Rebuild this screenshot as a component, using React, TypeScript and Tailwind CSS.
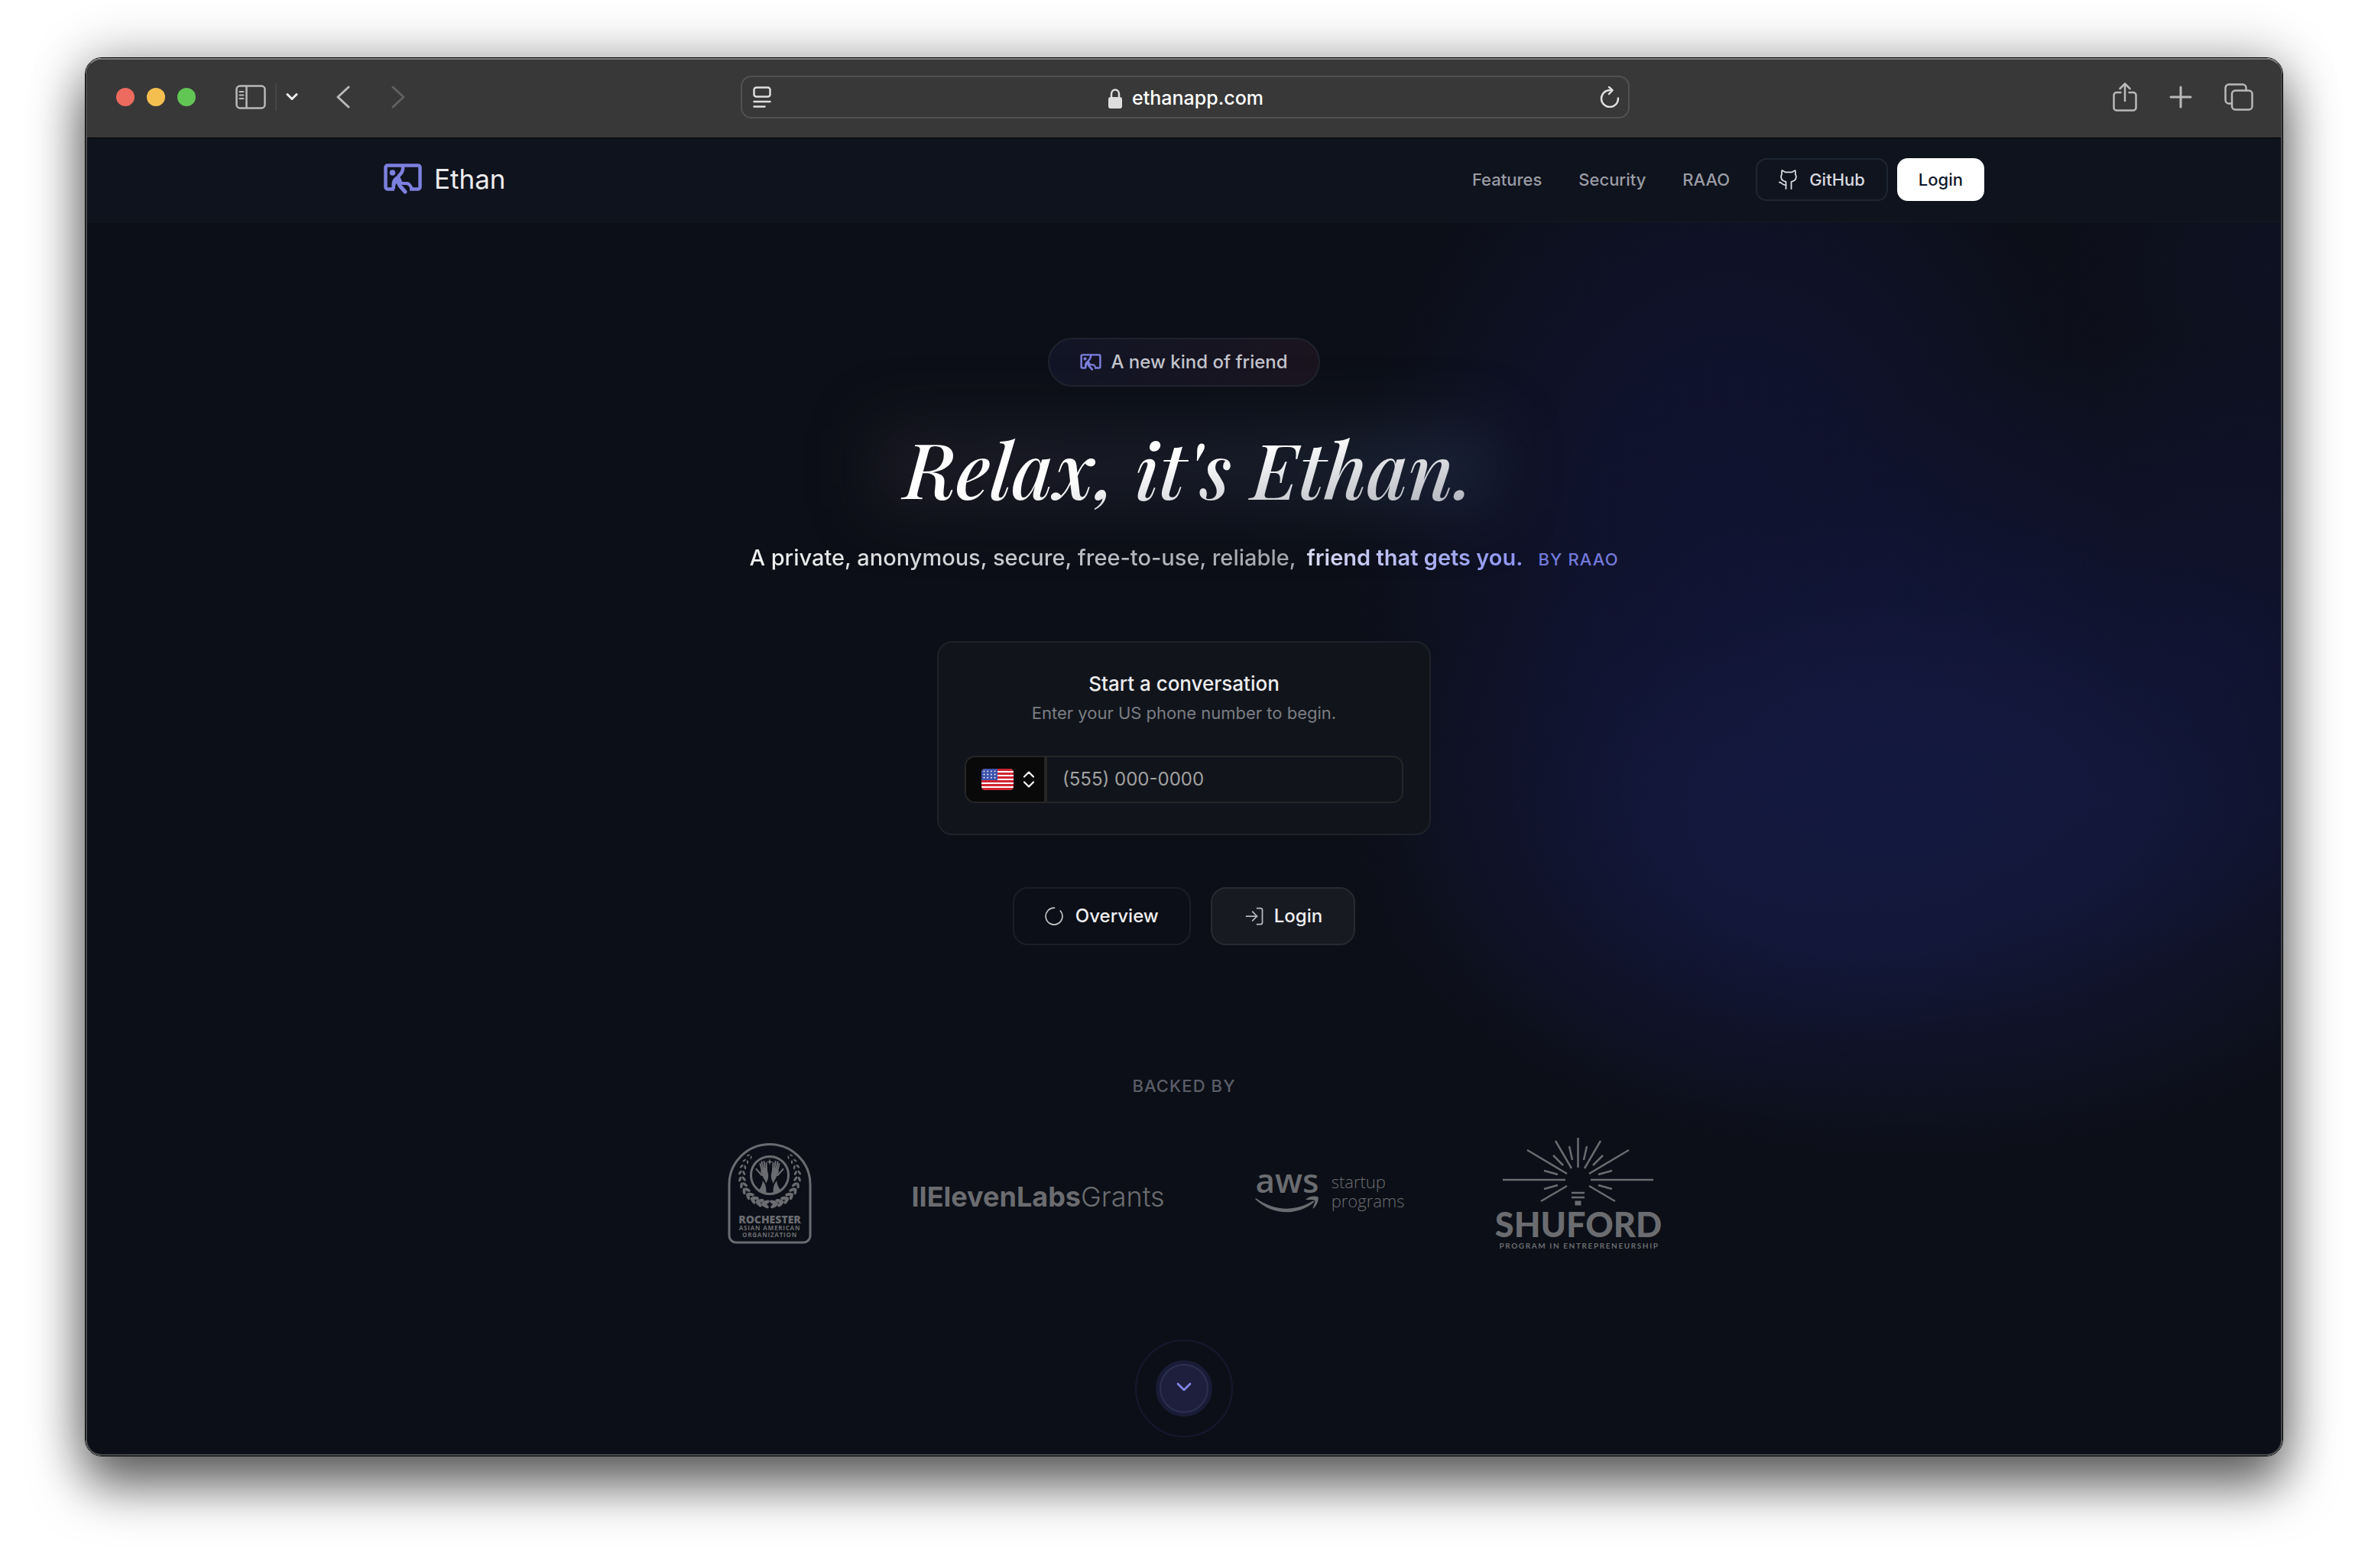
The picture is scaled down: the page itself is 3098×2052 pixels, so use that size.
import { useState } from "react";
import { ChevronDown, LogIn } from "lucide-react";

const navLinks = ["Features", "Security", "RAAO"];

function EthanMark({ className }: { className?: string }) {
  return (
    <svg viewBox="0 0 50 40" fill="none" stroke="currentColor" className={className} aria-hidden="true">
      <path d="M14 33.500H5a2.500 2.500 0 0 1-2.500-2.500V5A2.500 2.500 0 0 1 5 2.500h40A2.500 2.500 0 0 1 47.500 5v26a2.500 2.500 0 0 1-2.500 2.500H34" strokeWidth="4.500" strokeLinejoin="round" />
      <circle cx="11.500" cy="12" r="3.800" fill="currentColor" stroke="none" />
      <path d="M25 3c1 7-2 10-6 14" strokeWidth="4.500" />
      <path d="M19 24c3 1 5 2 7 2h5c3 1 4 3 6 7" strokeWidth="4" strokeLinejoin="round" />
      <path d="M17 20l4 9 7 8" strokeWidth="5" strokeLinecap="round" strokeLinejoin="round" />
      <path d="M10.500 33c0-4-.500-8 1.500-12 2-3 5-5 8-6l4 8-5 3c-3-1-4 2-4 7z" fill="currentColor" stroke="none" />
    </svg>
  );
}

function CatIcon() {
  return (
    <svg viewBox="0 0 28 28" className="size-7" fill="none" stroke="currentColor" strokeWidth="1.800" strokeLinecap="round" strokeLinejoin="round" aria-hidden="true">
      <path d="M4.500 2l4 2.300h9L21.500 2c.600 1.800.700 3.300.200 4.800 1 1.400 1.300 2.800 1.100 4.400-.400 3.200-2.600 5-6.300 5.600v9.200" />
      <path d="M4.500 2c-.600 1.800-.700 3.300-.200 4.800-1 1.400-1.300 2.800-1.100 4.400.400 3.200 2.600 5 6.300 5.600v9.200" />
      <path d="M1 17.500c3 0 3 4 8.500 3.500" />
    </svg>
  );
}

function BrowserBar() {
  const [url, setUrl] = useState("ethanapp.com");
  return (
    <div className="flex h-[103px] items-center border-b border-black bg-[#383838] px-9 pb-1 text-[#b9b9b9]">
      <div className="flex flex-1 items-center pl-0.5">
        <div className="flex gap-4">
          <span className="size-6 rounded-full bg-[#ed6a5f]" />
          <span className="size-6 rounded-full bg-[#f5bf4f]" />
          <span className="size-6 rounded-full bg-[#62c655]" />
        </div>
        <button aria-label="Sidebar" className="ml-[52px]">
          <svg viewBox="0 0 40 32" className="h-8 w-10" fill="none" stroke="currentColor" strokeWidth="2.500">
            <rect x="1.500" y="1.500" width="37" height="29" rx="4.500" />
            <path d="M14.500 2v28" />
            <path d="M5.500 9h5M5.500 13.500h5M5.500 18h5" strokeWidth="2" strokeLinecap="round" />
          </svg>
        </button>
        <span className="ml-3 h-9 w-0.5 bg-[#464646]" />
        <button aria-label="Tab groups" className="ml-3">
          <svg viewBox="0 0 16 12" className="h-3 w-4" fill="none" stroke="#ececec" strokeWidth="3" strokeLinecap="round" strokeLinejoin="round">
            <path d="M2 2.500l6 6 6-6" />
          </svg>
        </button>
        <button aria-label="Back" className="ml-[50px]">
          <svg viewBox="0 0 18 30" className="h-[30px] w-[18px]" fill="none" stroke="currentColor" strokeWidth="3" strokeLinecap="round" strokeLinejoin="round">
            <path d="M16 2L2 15l14 13" />
          </svg>
        </button>
        <button aria-label="Forward" className="ml-[54px] text-[#606060]">
          <svg viewBox="0 0 18 30" className="h-[30px] w-[18px]" fill="none" stroke="currentColor" strokeWidth="3" strokeLinecap="round" strokeLinejoin="round">
            <path d="M2 2l14 13L2 28" />
          </svg>
        </button>
      </div>

      <div className="flex h-14 w-[1163px] items-center justify-between rounded-[14px] border-2 border-[#515151] pr-2.5 pl-3.5 text-[#dedede]">
        <svg viewBox="0 0 24 28" className="h-7 w-6" fill="none" stroke="currentColor" strokeWidth="2.500" strokeLinecap="round" aria-hidden="true">
          <rect x="1.500" y="1.500" width="21" height="12" rx="3" />
          <path d="M1.500 20h21M1.500 26.500h14" />
        </svg>
        <div className="flex items-center gap-3 pt-1">
          <svg viewBox="0 0 20 26" className="h-[26px] w-5" aria-hidden="true">
            <rect x="1" y="11" width="18" height="15" rx="3" fill="currentColor" />
            <path d="M5 12V7a5 5.500 0 0 1 10 0v5" fill="none" stroke="currentColor" strokeWidth="2.500" />
          </svg>
          <input
            aria-label="Address"
            value={url}
            onChange={(e) => setUrl(e.target.value)}
            className="field-sizing-content bg-transparent text-[25px] font-medium text-white outline-none"
          />
        </div>
        <button aria-label="Reload">
          <svg viewBox="0 0 26 28" className="h-7 w-[26px]" fill="none" stroke="currentColor" strokeWidth="2.500" strokeLinecap="round" strokeLinejoin="round">
            <path d="M24 15.500A11 11 0 1 1 13 5h3" />
            <path d="M12 .800L16.500 5.200 12 10" />
          </svg>
        </button>
      </div>

      <div className="flex flex-1 items-center justify-end gap-[42px]">
        <button aria-label="Share">
          <svg viewBox="0 0 32 38" className="h-[38px] w-8" fill="none" stroke="currentColor" strokeWidth="2.500" strokeLinecap="round" strokeLinejoin="round">
            <path d="M10.500 13H5a3.500 3.500 0 0 0-3.500 3.500V33A3.500 3.500 0 0 0 5 36.500h22a3.500 3.500 0 0 0 3.500-3.500V16.500A3.500 3.500 0 0 0 27 13h-5.500" />
            <path d="M16 24V2M9.500 8L16 1.500 22.500 8" />
          </svg>
        </button>
        <button aria-label="New tab">
          <svg viewBox="0 0 30 30" className="size-[30px]" fill="none" stroke="currentColor" strokeWidth="3" strokeLinecap="round">
            <path d="M15 2v26M2 15h26" />
          </svg>
        </button>
        <button aria-label="Show tabs">
          <svg viewBox="0 0 38 36" className="h-9 w-[38px]" fill="none" stroke="currentColor" strokeWidth="2.500" strokeLinejoin="round">
            <rect x="10" y="9.500" width="26.500" height="25" rx="4.500" />
            <path d="M9.500 26.500H6A4.500 4.500 0 0 1 1.500 22V6A4.500 4.500 0 0 1 6 1.500h18A4.500 4.500 0 0 1 28.500 6v3" />
          </svg>
        </button>
      </div>
    </div>
  );
}

function Nav() {
  return (
    <header className="border-b-2 border-[#12161f] bg-[#0f131d]">
      <div className="mx-auto flex h-[108px] max-w-[2094px] items-center justify-between">
        <a href="#" className="flex items-center gap-4 pb-0.5">
          <EthanMark className="h-10 w-[50px] text-[#7c80de]" />
          <span className="text-[35px] text-[#ececee]">Ethan</span>
        </a>
        <nav className="flex items-center text-[22px] font-medium">
          <div className="mr-[34px] flex gap-12 text-[#9a9ca5]">
            {navLinks.map((l) => (
              <a key={l} href={`#${l.toLowerCase()}`}>
                {l}
              </a>
            ))}
          </div>
          <a href="#github" className="mr-3 flex h-14 items-center gap-3 rounded-[14px] border-2 border-[#1e2634] bg-[#10141e] px-7 text-[#d8dae0]">
            <CatIcon />
            GitHub
          </a>
          <a href="#login" className="flex h-14 items-center rounded-[14px] bg-white px-7 text-[#0f172a]">
            Login
          </a>
        </nav>
      </div>
    </header>
  );
}

function UsFlag() {
  return (
    <svg viewBox="0 0 42 28" className="h-7 w-[42px] rounded-[5px]" aria-hidden="true">
      <rect width="42" height="28" fill="#fff" />
      {[0, 1, 2, 3, 4, 5].map((i) => (
        <rect key={i} y={i * 5} width="42" height="3" fill="#cf2431" />
      ))}
      <rect width="21" height="15" fill="#3f54ab" />
      {[0, 1, 2].map((r) =>
        [0, 1, 2, 3].map((c) => <circle key={`${r}-${c}`} cx={3.5 + c * 4.7} cy={3.3 + r * 4.2} r="0.900" fill="#fff" />)
      )}
    </svg>
  );
}

function PhoneCard() {
  const [phone, setPhone] = useState("");
  return (
    <section className="mt-[87px] w-[646px] rounded-[20px] border-2 border-[#20222b] bg-[#11141b] px-[34px] pt-9 pb-10 text-center">
      <h2 className="text-[26px] leading-9 font-medium text-[#ededef]">Start a conversation</h2>
      <p className="mt-0.5 text-[22px] leading-9 text-[#7b7d83]">Enter your US phone number to begin.</p>
      <div className="mt-[38px] flex h-[62px] overflow-hidden rounded-[14px] border-2 border-[#262626]">
        <label className="relative flex items-center gap-3 border-r-4 border-[#262626] bg-[#090909] pr-3 pl-5">
          <UsFlag />
          <svg viewBox="0 0 16 22" className="h-[22px] w-4" fill="none" stroke="#f5f5f5" strokeWidth="2.200" strokeLinecap="round" strokeLinejoin="round" aria-hidden="true">
            <path d="M2 7.500l6-6 6 6M2 14.500l6 6 6-6" />
          </svg>
          <select aria-label="Country" className="absolute inset-0 opacity-0">
            <option>US</option>
          </select>
        </label>
        <input
          type="tel"
          aria-label="Phone number"
          value={phone}
          onChange={(e) => setPhone(e.target.value)}
          placeholder="(555) 000-0000"
          className="min-w-0 flex-1 bg-transparent px-5 text-2xl text-white outline-none placeholder:text-[#a1a1a1]"
        />
      </div>
    </section>
  );
}

// leaf pairs running down one side of the wreath
const leaves = Array.from({ length: 11 }, (_, i) => {
  const deg = 224 - i * 12.5;
  const a = (deg * Math.PI) / 180;
  return { deg, x: Math.cos(a), y: Math.sin(a), size: 2.2 + i * 0.34 };
});

function Wreath() {
  return (
    <g>
      {leaves.map((l) => (
        <g key={l.deg}>
          <ellipse rx={l.size} ry={l.size * 0.45} transform={`translate(${55 + l.x * 34} ${43 + l.y * 35}) rotate(${l.deg + 58})`} />
          <ellipse rx={l.size} ry={l.size * 0.45} transform={`translate(${55 + l.x * 39} ${43 + l.y * 39}) rotate(${l.deg + 115})`} />
        </g>
      ))}
    </g>
  );
}

function RaisedHand() {
  return (
    <g>
      <path d="M43 37l3 7c2 4 4 6 4 9l2-4c1.500-4 1.500-7 .500-11l-1.500-6-5 1z" />
      <path d="M37.500 34l7 8M42.500 27l2.500 10M44.500 24.500L47 36M47.500 24L49 36M50.500 26l.500 11" fill="none" stroke="currentColor" strokeWidth="2" strokeLinecap="round" />
      <path d="M46 49c-1 6-3 10-6 14 3 2 6 3 10 3 1-5 0-9-1-12z" />
    </g>
  );
}

function RochesterLogo() {
  return (
    <svg viewBox="0 0 110 132" className="h-[132px] w-[110px] font-['Open_Sans',sans-serif]" fill="currentColor" role="img" aria-label="Rochester Asian American Organization">
      <path d="M2 54a53 52.500 0 0 1 106 0v67a9 9 0 0 1-9 9H11a9 9 0 0 1-9-9z" fill="none" stroke="currentColor" strokeWidth="3" />
      <Wreath />
      <g transform="translate(110 0) scale(-1 1)">
        <Wreath />
      </g>
      <circle cx="55" cy="42" r="24.500" fill="none" stroke="currentColor" strokeWidth="3" />
      <RaisedHand />
      <g transform="translate(110 0) scale(-1 1)">
        <RaisedHand />
      </g>
      <path d="M55 20l1 3.500 3.500 1-3.500 1-1 3.500-1-3.500-3.500-1 3.500-1z" />
      <text x="55" y="105" textAnchor="middle" className="text-[14px] font-extrabold">ROCHESTER</text>
      <text x="55" y="114" textAnchor="middle" className="text-[8px] font-bold tracking-widest">ASIAN AMERICAN</text>
      <text x="55" y="123" textAnchor="middle" className="text-[8px] font-bold tracking-widest">ORGANIZATION</text>
    </svg>
  );
}

function AwsLogo() {
  return (
    <div className="flex items-center gap-4">
      <svg viewBox="0 -25 84 110" className="h-[110px] w-[84px]" fill="currentColor" role="img" aria-label="aws">
        <text x="42" y="29" textAnchor="middle" className="font-['Open_Sans',sans-serif] text-[44px] font-semibold">aws</text>
        <path d="M1 36c24 17 50 18 74 4 2-1 3 1 1 2-22 18-54 16-75-4-1-1-1-2 0-2z" />
        <path d="M67 37c4-4 11-4 15-3 2 2 0 10-5 15-1 1-2 0-1-1 1-3 3-8 2-9s-7-1-10-1c-1 0-2 0-1-1z" />
      </svg>
      <p className="pb-1.5 font-['Open_Sans',sans-serif] text-[22px] leading-[25px] font-light">
        startup
        <br />
        programs
      </p>
    </div>
  );
}

function ShufordLogo() {
  return (
    <svg viewBox="0 0 218 146" className="h-[146px] w-[218px] font-['Lato',sans-serif]" role="img" aria-label="Shuford Program in Entrepreneurship">
      <path
        d="M108.500 0v39M79 4l21 36M138 4l-21 36M42 16l52 31M175 16l-52 31M10 55h82M125 55h82M60 83l34-20M157 83l-34-20"
        fill="none"
        stroke="currentColor"
        strokeWidth="2.500"
      />
      <path
        d="M97 11l4 18M120 11l-4 18M76 23l13 13M141 23l-13 13M64 43l18 5M153 43l-18 5M64 67l18-5M153 67l-18-5M100 72h17M100 78h17"
        fill="none"
        stroke="currentColor"
        strokeWidth="2.500"
      />
      <rect x="104.500" y="82.500" width="8" height="6" fill="currentColor" />
      <text x="109" y="130" textAnchor="middle" fill="currentColor" className="text-[45px] font-black">SHUFORD</text>
      <text x="110" y="145" textAnchor="middle" fill="currentColor" className="text-[10px] font-bold tracking-[0.16em]">PROGRAM IN ENTREPRENEURSHIP</text>
    </svg>
  );
}

export default function App() {
  return (
    <div className="bg-white px-[111px] pt-[75px] pb-[147px] font-['Inter',sans-serif]">
      <div className="rounded-[22px] border border-black shadow-[0_40px_66px_rgba(0,0,0,0.55),0_0_70px_rgba(0,0,0,0.32)]">
        <div className="overflow-hidden rounded-[21px] border-2 border-[#48494c] border-t-[#7c7c7c] bg-[#0c0f17]">
          <BrowserBar />
          <Nav />
          <main className="flex flex-col items-center bg-[radial-gradient(ellipse_26%_27%_at_83%_50%,#161c4bb0,#161b48a0_35%,#14183f50_70%,transparent),radial-gradient(ellipse_18%_44%_at_75%_28%,#13174590,#13174575_40%,#13174530_75%,transparent),radial-gradient(ellipse_22%_26%_at_97%_35%,#12164090,#12164060_50%,transparent),radial-gradient(ellipse_12%_22%_at_100%_4%,#12153560,transparent)] pt-[151px] pb-[22px]">
            <div className="flex h-16 items-center gap-3 rounded-full border-2 border-[#20232e] bg-linear-to-r from-[#121526] to-[#1a141f] px-10 text-2xl font-medium text-[#c3c5cc]">
              <EthanMark className="h-[22px] w-7 text-[#7c80de]" />
              A new kind of friend
            </div>

            <div className="relative mt-[46px] pl-3">
              <div className="absolute -inset-x-4 inset-y-2 bg-linear-to-r from-[#221f2a]/70 via-[#1b1e2c]/80 to-[#202c42]/70 blur-2xl" />
              <h1 className="relative bg-linear-to-br from-white from-45% to-[#a9abb4] bg-clip-text px-2 font-['Playfair_Display','Liberation_Serif',serif] text-[101px] leading-[120px] font-medium text-transparent italic">
                Relax, it's Ethan.
              </h1>
            </div>

            <p className="mt-[38px] flex items-baseline text-[29px] leading-10 font-medium">
              <span className="bg-linear-to-r from-[#f3f3f4] to-[#a6a8b0] bg-clip-text text-transparent">
                A private, anonymous, secure, free-to-use, reliable,
              </span>
              <strong className="ml-3.5 bg-linear-to-r from-[#dfe1f8] to-[#8c92f2] bg-clip-text font-semibold text-transparent">
                friend that gets you.
              </strong>
              <span className="ml-5 text-[22px] tracking-wider text-[#7379dc]">BY RAAO</span>
            </p>

            <PhoneCard />

            <div className="mt-[68px] flex gap-[26px] text-2xl font-medium text-[#f0f0f2]">
              <button className="flex h-[76px] items-center gap-4 rounded-[20px] border-2 border-[#1b1e27] px-10">
                <svg viewBox="0 0 24 24" className="size-6" fill="none" stroke="#c4c5c8" strokeWidth="1.700" strokeLinecap="round" aria-hidden="true">
                  <path d="M12.500 1.200A10.900 10.900 0 1 0 20.300 5" />
                </svg>
                Overview
              </button>
              <button className="flex h-[76px] items-center gap-3 rounded-[20px] border-2 border-[#272a31] bg-[#181a21] px-[41px]">
                <LogIn className="size-7 text-[#b9babd]" strokeWidth={1.5} />
                Login
              </button>
            </div>

            <p className="mt-[170px] text-[22px] leading-7 font-medium tracking-wider text-[#5a5d69]">BACKED BY</p>
            <div className="mt-[50px] flex h-[154px] items-center gap-[118px] pl-7 text-[#6b6c70]">
              <RochesterLogo />
              <p className="pt-2 pl-3 text-[36px] font-bold">
                IIElevenLabs<span className="font-light">Grants</span>
              </p>
              <AwsLogo />
              <ShufordLogo />
            </div>

            <button aria-label="Scroll down" className="mt-[114px] flex size-32 items-center justify-center rounded-full border-2 border-[#171830]">
              <span className="flex size-[74px] items-center justify-center rounded-full border-[5px] border-[#1a1b36] bg-[#1d1f3c]">
                <span className="flex size-16 items-center justify-center rounded-full border-2 border-[#2b3050] pb-1">
                  <ChevronDown className="size-8 text-[#8186ee]" strokeWidth={2} />
                </span>
              </span>
            </button>
          </main>
        </div>
      </div>
    </div>
  );
}
